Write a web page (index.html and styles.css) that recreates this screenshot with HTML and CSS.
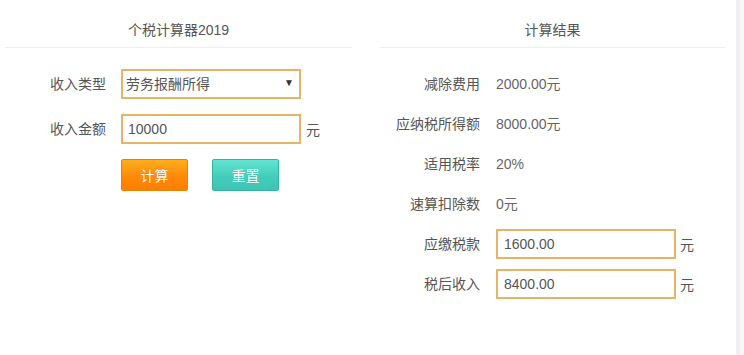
FILE: index.html
```html
<!DOCTYPE html>
<html lang="zh-CN">
<head>
  <meta charset="UTF-8" />
  <title>个税计算器2019</title>
  <link rel="stylesheet" href="styles.css">
</head>
<body>
  <div class="page">
    <section class="panel panel-left">
      <h2 class="panel-title">个税计算器2019</h2>
      <form class="calc-form" id="calcForm">
        <label class="row-label">收入类型</label>
        <div class="select-wrap">
          <select class="field" id="incomeType">
            <option>劳务报酬所得</option>
            <option>工资薪金所得</option>
          </select>
          <span class="arrow">▼</span>
        </div>
        <span></span>

        <label class="row-label">收入金额</label>
        <input class="field" type="text" id="income" value="10000" />
        <span class="unit">元</span>

        <span></span>
        <div class="btns">
          <button type="submit" class="btn btn-calc">计算</button>
          <button type="reset" class="btn btn-reset">重置</button>
        </div>
        <span></span>
      </form>
    </section>

    <section class="panel panel-right">
      <h2 class="panel-title">计算结果</h2>
      <div class="result">
        <span class="row-label">减除费用</span>
        <span class="value">2000.00元</span>
        <span></span>

        <span class="row-label">应纳税所得额</span>
        <span class="value">8000.00元</span>
        <span></span>

        <span class="row-label">适用税率</span>
        <span class="value">20%</span>
        <span></span>

        <span class="row-label">速算扣除数</span>
        <span class="value">0元</span>
        <span></span>

        <span class="row-label">应缴税款</span>
        <input class="field" type="text" value="1600.00" readonly />
        <span class="unit">元</span>

        <span class="row-label">税后收入</span>
        <input class="field" type="text" value="8400.00" readonly />
        <span class="unit">元</span>
      </div>
    </section>
    <div class="edge"></div>
  </div>
</body>
</html>
```

FILE: styles.css
```css
html, body {
  margin: 0;
  padding: 0;
  background: #fff;
}
body {
  font-family: "Liberation Sans", "Noto Sans CJK SC", sans-serif;
  font-size: 14px;
  color: #555;
}
.page {
  display: grid;
  grid-template-columns: 347px 373px 1fr;
  padding-left: 5px;
  height: 355px;
}
.panel-right {
  margin-left: 28px;
}
.edge {
  margin-left: 11px;
  border-left: 4px solid #f0f0f2;
  background: #f7f7f9;
}
.panel-title {
  margin: 0;
  padding: 20px 0 6px;
  line-height: 21px;
  font-size: 14px;
  font-weight: normal;
  text-align: center;
  color: #555;
  border-bottom: 1px solid #eeeeee;
}
.calc-form {
  display: grid;
  grid-template-columns: 101px 180px auto;
  column-gap: 15px;
  row-gap: 15px;
  margin-top: 21px;
  align-items: center;
}
.calc-form .unit {
  margin-left: -10px;
}
.result {
  display: grid;
  grid-template-columns: 100px 180px auto;
  column-gap: 16px;
  row-gap: 10px;
  margin-top: 21px;
  align-items: center;
}
.result .unit {
  margin-left: -12px;
}
.row-label {
  text-align: right;
  color: #555;
  line-height: 30px;
}
.value {
  line-height: 30px;
  color: #666;
}
.unit {
  color: #555;
}
.field {
  box-sizing: border-box;
  width: 180px;
  height: 30px;
  border: 2px solid #e6b467;
  padding: 0 5px;
  font-family: "Liberation Sans", "Noto Sans CJK SC", sans-serif;
  font-size: 14px;
  color: #555;
  background: #fff;
  outline: none;
  border-radius: 0;
}
.result .field {
  padding-left: 6px;
}
.select-wrap {
  position: relative;
  width: 180px;
  height: 30px;
}
select.field {
  appearance: none;
  -webkit-appearance: none;
  padding-left: 3px;
}
.arrow {
  position: absolute;
  right: 7px;
  top: 8px;
  font-size: 10px;
  color: #333;
  pointer-events: none;
}
.btns {
  display: flex;
  gap: 24px;
}
.btn {
  box-sizing: border-box;
  width: 67px;
  height: 32px;
  border-radius: 2px;
  font-family: "Liberation Sans", "Noto Sans CJK SC", sans-serif;
  font-size: 14px;
  color: #fff;
  text-shadow: 0 0 1px rgba(0, 0, 0, 0.2);
  cursor: pointer;
  padding: 0;
}
.btn-calc {
  background: linear-gradient(#ffad1c, #ff8a0a 55%, #ff7e00);
  border: 1px solid #e98200;
}
.btn-reset {
  background: linear-gradient(#62e5d2, #44cdbc 55%, #3fc4b2);
  border: 1px solid #35b3a2;
}
```
